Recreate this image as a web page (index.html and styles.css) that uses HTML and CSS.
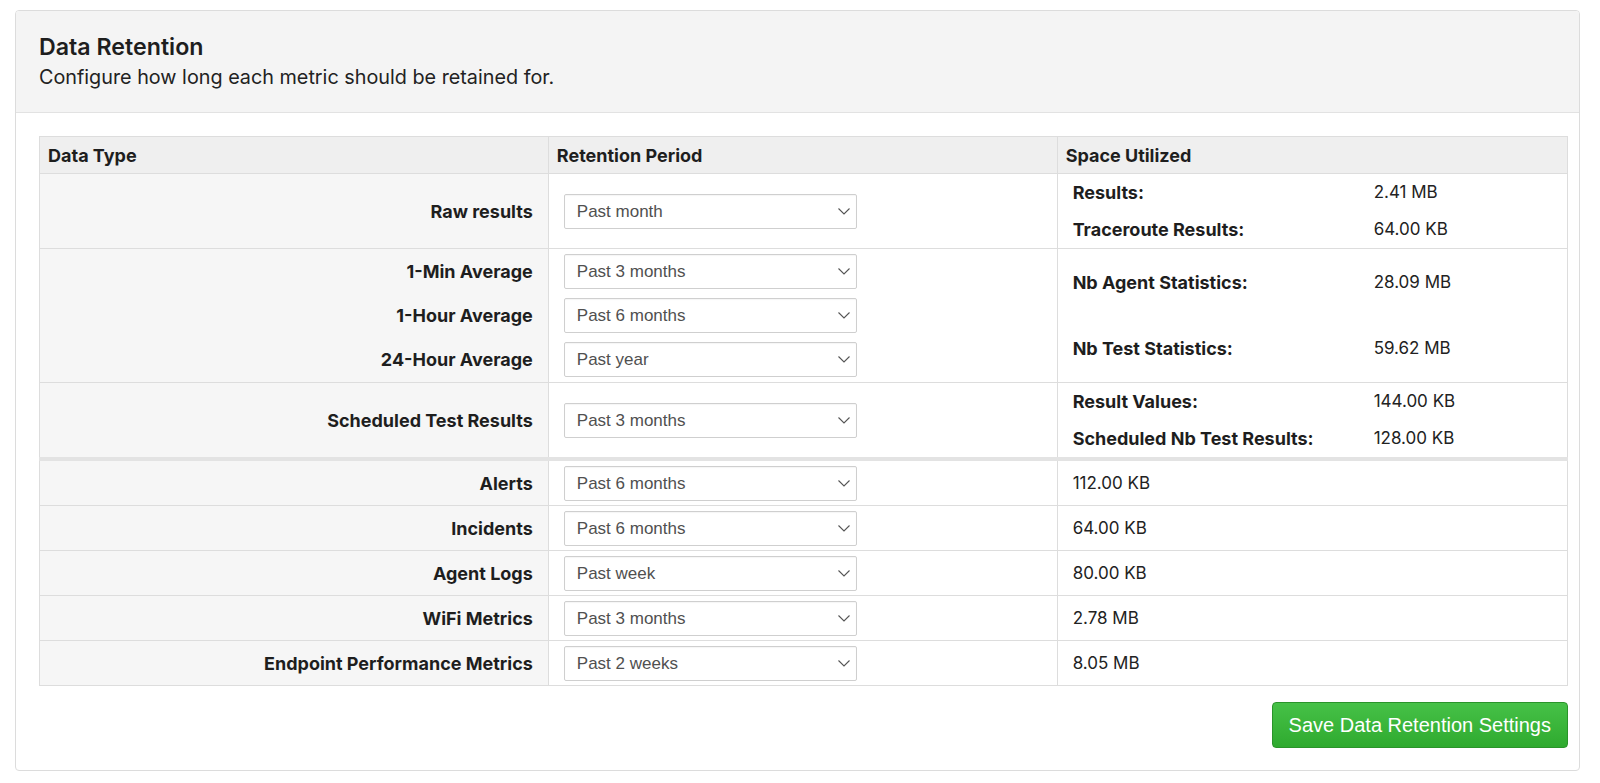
FILE: index.html
```html
<!DOCTYPE html>
<html lang="en">
<head>
<meta charset="utf-8">
<title>Data Retention</title>
<link rel="stylesheet" href="styles.css">
</head>
<body>
<div class="panel">
  <div class="panel-head">
    <h2 class="panel-title">Data Retention</h2>
    <p class="panel-sub">Configure how long each metric should be retained for.</p>
  </div>
  <div class="panel-body">
    <table class="ret">
      <colgroup>
        <col class="c1"><col class="c2"><col class="c3">
      </colgroup>
      <thead>
        <tr><th>Data Type</th><th>Retention Period</th><th>Space Utilized</th></tr>
      </thead>
      <tbody>
        <tr>
          <td class="lbl">Raw results</td>
          <td class="sel"><div class="select"><select><option>Past month</option></select><svg class="chev" viewBox="0 0 12 7"><path d="M0.5 0.5 L6 6 L11.5 0.5"/></svg></div></td>
          <td class="space">
            <table class="kv"><colgroup><col class="k"><col></colgroup>
              <tr><td class="kl">Results:</td><td>2.41 MB</td></tr>
              <tr><td class="kl">Traceroute Results:</td><td>64.00 KB</td></tr>
            </table>
          </td>
        </tr>
        <tr>
          <td class="lbl">
            <div class="stack-lbl">1-Min Average</div>
            <div class="stack-lbl">1-Hour Average</div>
            <div class="stack-lbl">24-Hour Average</div>
          </td>
          <td class="sel">
            <div class="stack">
              <div class="select"><select><option>Past 3 months</option></select><svg class="chev" viewBox="0 0 12 7"><path d="M0.5 0.5 L6 6 L11.5 0.5"/></svg></div>
              <div class="select"><select><option>Past 6 months</option></select><svg class="chev" viewBox="0 0 12 7"><path d="M0.5 0.5 L6 6 L11.5 0.5"/></svg></div>
              <div class="select"><select><option>Past year</option></select><svg class="chev" viewBox="0 0 12 7"><path d="M0.5 0.5 L6 6 L11.5 0.5"/></svg></div>
            </div>
          </td>
          <td class="space">
            <table class="kv tall"><colgroup><col class="k"><col></colgroup>
              <tr><td class="kl">Nb Agent Statistics:</td><td>28.09 MB</td></tr>
              <tr><td class="kl">Nb Test Statistics:</td><td>59.62 MB</td></tr>
            </table>
          </td>
        </tr>
        <tr>
          <td class="lbl">Scheduled Test Results</td>
          <td class="sel"><div class="select"><select><option>Past 3 months</option></select><svg class="chev" viewBox="0 0 12 7"><path d="M0.5 0.5 L6 6 L11.5 0.5"/></svg></div></td>
          <td class="space">
            <table class="kv"><colgroup><col class="k"><col></colgroup>
              <tr><td class="kl">Result Values:</td><td>144.00 KB</td></tr>
              <tr><td class="kl">Scheduled Nb Test Results:</td><td>128.00 KB</td></tr>
            </table>
          </td>
        </tr>
      </tbody>
      <tbody class="simple">
        <tr>
          <td class="lbl">Alerts</td>
          <td class="sel"><div class="select"><select><option>Past 6 months</option></select><svg class="chev" viewBox="0 0 12 7"><path d="M0.5 0.5 L6 6 L11.5 0.5"/></svg></div></td>
          <td class="val">112.00 KB</td>
        </tr>
        <tr>
          <td class="lbl">Incidents</td>
          <td class="sel"><div class="select"><select><option>Past 6 months</option></select><svg class="chev" viewBox="0 0 12 7"><path d="M0.5 0.5 L6 6 L11.5 0.5"/></svg></div></td>
          <td class="val">64.00 KB</td>
        </tr>
        <tr>
          <td class="lbl">Agent Logs</td>
          <td class="sel"><div class="select"><select><option>Past week</option></select><svg class="chev" viewBox="0 0 12 7"><path d="M0.5 0.5 L6 6 L11.5 0.5"/></svg></div></td>
          <td class="val">80.00 KB</td>
        </tr>
        <tr>
          <td class="lbl">WiFi Metrics</td>
          <td class="sel"><div class="select"><select><option>Past 3 months</option></select><svg class="chev" viewBox="0 0 12 7"><path d="M0.5 0.5 L6 6 L11.5 0.5"/></svg></div></td>
          <td class="val">2.78 MB</td>
        </tr>
        <tr>
          <td class="lbl">Endpoint Performance Metrics</td>
          <td class="sel"><div class="select"><select><option>Past 2 weeks</option></select><svg class="chev" viewBox="0 0 12 7"><path d="M0.5 0.5 L6 6 L11.5 0.5"/></svg></div></td>
          <td class="val">8.05 MB</td>
        </tr>
      </tbody>
    </table>
    <div class="actions">
      <button class="btn-save" type="button">Save Data Retention Settings</button>
    </div>
  </div>
</div>
</body>
</html>
```
FILE: styles.css
```css
html, body {
  margin: 0;
  padding: 0;
  background: #ffffff;
}
body {
  font-family: Inter, "Noto Sans", "Liberation Sans", sans-serif;
  color: #222222;
}
.panel {
  margin: 10px 20px 0 15px;
  border: 1px solid #dcdcdc;
  border-radius: 4px;
  background: #ffffff;
  overflow: hidden;
}
.panel-head {
  background: #f4f4f4;
  border-bottom: 1px solid #e2e2e2;
  padding: 23px 23px 21px;
}
.panel-title {
  margin: 0;
  font-size: 23.2px;
  line-height: 26px;
  font-weight: 600;
  color: #1e1e1e;
}
.panel-sub {
  margin: 4px 0 0;
  font-size: 19.8px;
  line-height: 27px;
  font-weight: 400;
  color: #222222;
}
.panel-body {
  padding: 23px 11px 22px 23px;
}
.ret {
  width: 100%;
  border-collapse: collapse;
  table-layout: fixed;
  border: 1px solid #dddddd;
  font-size: 17px;
  line-height: 21px;
}
.ret col.c1, .ret col.c2 { width: 33.3%; }
.ret th {
  background: #efefef;
  text-align: left;
  font-size: 18px;
  font-weight: 700;
  padding: 8px 8px 7px;
  border: 1px solid #dddddd;
  color: #1e1e1e;
}
.ret td {
  border: 1px solid #dddddd;
  vertical-align: middle;
}
.ret td.lbl {
  background: #f6f6f6;
  text-align: right;
  font-size: 18px;
  font-weight: 700;
  padding: 5px 15px;
  color: #1e1e1e;
}
.ret td.sel {
  padding: 5px 15px;
}
.ret tbody.simple td.lbl,
.ret tbody.simple td.sel,
.ret tbody.simple td.val {
  padding-top: 5px;
  padding-bottom: 4px;
}
.ret td.space {
  padding: 0;
}
.ret td.val {
  padding: 5px 15px;
}
.ret tbody.simple tr:first-child td {
  border-top: 4px solid #e3e3e3;
}
.stack-lbl {
  height: 35px;
  line-height: 35px;
  margin-bottom: 9px;
}
.stack-lbl:last-child { margin-bottom: 0; }
.stack {
  display: flex;
  flex-direction: column;
  gap: 9px;
}
.select {
  position: relative;
  width: 293px;
  height: 35px;
}
.select select {
  appearance: none;
  -webkit-appearance: none;
  width: 100%;
  height: 100%;
  box-sizing: border-box;
  border: 1px solid #cfcfcf;
  border-radius: 2px;
  background: #ffffff;
  box-shadow: inset 0 1px 1px rgba(0,0,0,0.04);
  font-family: "Liberation Sans", Arial, sans-serif;
  font-size: 17px;
  color: #505050;
  padding: 0 30px 0 12px;
  margin: 0;
  outline: none;
}
.chev {
  position: absolute;
  right: 7px;
  top: 14px;
  width: 12px;
  height: 7px;
  pointer-events: none;
}
.chev path {
  fill: none;
  stroke: #555555;
  stroke-width: 1.1;
}
.kv {
  width: 100%;
  border-collapse: collapse;
  table-layout: fixed;
}
.kv col.k { width: 301px; }
.kv td {
  border: none;
  padding: 8px 15px;
  vertical-align: middle;
}
.kv td.kl {
  font-size: 18px;
  font-weight: 700;
  color: #1e1e1e;
}
.kv.tall td {
  padding: 0 15px;
  height: 66px;
}
.actions {
  display: flex;
  justify-content: flex-end;
  margin-top: 16px;
}
.btn-save {
  font-family: "Liberation Sans", Arial, sans-serif;
  font-size: 20px;
  color: #ffffff;
  height: 46px;
  padding: 0 16px;
  border: 1px solid #2a942a;
  border-radius: 4px;
  background: linear-gradient(#46c147, #2faa2f);
  cursor: pointer;
}
```
